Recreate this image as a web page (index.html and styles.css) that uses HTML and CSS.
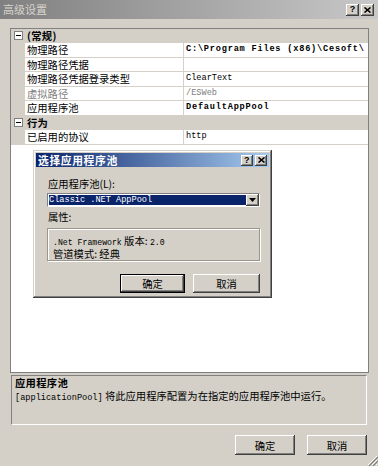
FILE: index.html
```html
<!DOCTYPE html>
<html lang="zh-CN">
<head>
  <meta charset="UTF-8" />
  <title>高级设置</title>
  <link rel="stylesheet" href="styles.css">
</head>
<body>
  <div class="window">
    <div class="titlebar">
      <span class="title">高级设置</span>
      <div class="cap-btns">
        <span class="cap-btn">?</span>
        <span class="cap-btn">
          <svg width="7" height="6" viewBox="0 0 7 6"><path d="M0.5 0.5 L6.5 5.5 M6.5 0.5 L0.5 5.5" stroke="#000" stroke-width="1.6"/></svg>
        </span>
      </div>
    </div>

    <div class="content">
      <!-- 属性网格 -->
      <div class="propgrid">
        <div class="row category">
          <span class="margin"><span class="expander"></span></span>
          <span class="cat-name">(常规)</span>
        </div>
        <div class="row">
          <span class="margin"></span>
          <span class="name">物理路径</span>
          <span class="value strong">C:\Program Files (x86)\Cesoft\</span>
        </div>
        <div class="row">
          <span class="margin"></span>
          <span class="name">物理路径凭据</span>
          <span class="value"></span>
        </div>
        <div class="row">
          <span class="margin"></span>
          <span class="name">物理路径凭据登录类型</span>
          <span class="value">ClearText</span>
        </div>
        <div class="row readonly">
          <span class="margin"></span>
          <span class="name">虚拟路径</span>
          <span class="value">/ESWeb</span>
        </div>
        <div class="row">
          <span class="margin"></span>
          <span class="name">应用程序池</span>
          <span class="value strong">DefaultAppPool</span>
        </div>
        <div class="row category">
          <span class="margin"><span class="expander"></span></span>
          <span class="cat-name">行为</span>
        </div>
        <div class="row">
          <span class="margin"></span>
          <span class="name">已启用的协议</span>
          <span class="value">http</span>
        </div>
      </div>

      <!-- 说明区 -->
      <div class="desc">
        <div class="desc-title">应用程序池</div>
        <div class="desc-text"><span class="mono">[applicationPool]</span> 将此应用程序配置为在指定的应用程序池中运行。</div>
      </div>

      <div class="actions">
        <button class="btn">确定</button>
        <button class="btn">取消</button>
      </div>
    </div>

    <!-- 选择应用程序池 对话框 -->
    <div class="dialog">
      <div class="dlg-title">
        <span>选择应用程序池</span>
        <div class="cap-btns">
          <span class="cap-btn small">?</span>
          <span class="cap-btn small">
            <svg width="7" height="6" viewBox="0 0 7 6"><path d="M0.5 0.5 L6.5 5.5 M6.5 0.5 L0.5 5.5" stroke="#000" stroke-width="1.6"/></svg>
          </span>
        </div>
      </div>
      <div class="dlg-body">
        <div class="field-label">应用程序池(L):</div>
        <div class="combo">
          <span class="combo-sel">Classic .NET AppPool</span>
          <span class="combo-btn">
            <svg width="7" height="4" viewBox="0 0 7 4"><path d="M0 0 H7 L3.5 4 Z" fill="#000"/></svg>
          </span>
        </div>
        <div class="field-label tight">属性:</div>
        <div class="props-box">
          <div><span class="mono small">.Net Framework</span> 版本: <span class="mono small">2.0</span></div>
          <div>管道模式: 经典</div>
        </div>
        <div class="dlg-actions">
          <button class="btn default">确定</button>
          <button class="btn">取消</button>
        </div>
      </div>
    </div>

    <svg class="grip" width="12" height="12" viewBox="0 0 12 12">
      <path d="M11 2 L2 11 M11 6 L6 11 M11 10 L10 11" stroke="#fff" stroke-width="1"/>
      <path d="M12 3 L3 12 M12 7 L7 12" stroke="#808080" stroke-width="1.2"/>
    </svg>
  </div>
</body>
</html>
```

FILE: styles.css
```css
:root {
  --face: #d4d0c8;
  --shadow: #808080;
  --dark: #404040;
  --hilite: #fff;
  --sel: #0a246a;
  --cjk: "Noto Sans CJK SC", "Noto Sans CJK JP", sans-serif;
  --mono: "Liberation Mono", "Noto Sans CJK SC", monospace;
}
* { box-sizing: border-box; }
body {
  margin: 0;
  background: var(--face);
  font-family: var(--cjk);
  font-size: 10.3px;
  line-height: 13px;
  color: #000;
}

.window {
  position: relative;
  width: 378px;
  height: 466px;
  display: flex;
  flex-direction: column;
  overflow: hidden;
}

/* 标题栏 (非活动) */
.titlebar {
  height: 19px;
  display: flex;
  align-items: center;
  justify-content: space-between;
  padding: 0 4px 0 3px;
  background: linear-gradient(to right, #808080, #c8c8c8);
  color: #d8d4cc;
}
.title { font-size: 11px; }
.cap-btns { display: flex; gap: 2px; }
.cap-btn {
  width: 13px;
  height: 12px;
  display: flex;
  align-items: center;
  justify-content: center;
  background: var(--face);
  box-shadow: inset -1px -1px var(--dark), inset 1px 1px var(--hilite), inset -2px -2px var(--shadow);
  font: bold 9px/1 "Liberation Sans", sans-serif;
  color: #000;
}
.cap-btn.small { width: 12px; height: 11px; }

.content {
  flex: 1;
  display: flex;
  flex-direction: column;
  padding: 9px 9px 0 10px;
}

/* 属性网格 */
.propgrid {
  height: 345px;
  background: #fff;
  border: 1px solid var(--shadow);
  overflow: hidden;
}
.row {
  display: flex;
  height: 14.45px;
  line-height: 13.45px;
  border-bottom: 1px solid var(--face);
}
.margin {
  width: 14px;
  flex: none;
  display: flex;
  align-items: center;
  justify-content: center;
  background: var(--face);
}
.expander {
  position: relative;
  width: 9px;
  height: 9px;
  border: 1px solid var(--shadow);
  background: #fff;
}
.expander::after {
  content: "";
  position: absolute;
  left: 1px;
  top: 3px;
  width: 5px;
  height: 1px;
  background: #000;
}
.category { background: var(--face); font-weight: bold; }
.cat-name { padding-left: 2px; letter-spacing: 0.3px; }
.name {
  width: 158px;
  flex: none;
  padding-left: 2px;
  white-space: nowrap;
  overflow: hidden;
}
.value {
  flex: 1;
  border-left: 1px solid var(--face);
  padding-left: 2px;
  white-space: nowrap;
  overflow: hidden;
  font-family: var(--mono);
  font-size: 8.6px;
}
.value.strong { font-weight: bold; letter-spacing: 0.8px; }
.readonly { color: var(--shadow); }

/* 说明区 */
.desc {
  height: 50px;
  margin: 2px 2px 0 1px;
  padding: 0 3px;
  border: 1px solid;
  border-color: var(--shadow) var(--hilite) var(--hilite) var(--shadow);
}
.desc-title { font-weight: bold; letter-spacing: 0.3px; }
.mono { font-family: var(--mono); font-size: 8.6px; }
.mono.small { font-size: 8.2px; }

.actions {
  display: flex;
  justify-content: flex-end;
  gap: 12px;
  margin-top: 10px;
  padding-right: 2px;
}
.btn {
  width: 60px;
  height: 20px;
  padding: 0;
  border: none;
  background: var(--face);
  box-shadow: inset -1px -1px var(--dark), inset 1px 1px var(--hilite), inset -2px -2px var(--shadow);
  font-family: var(--cjk);
  font-size: 10.3px;
  color: #000;
}

/* 对话框 */
.dialog {
  position: absolute;
  left: 33px;
  top: 150px;
  width: 239px;
  height: 148px;
  padding: 2px;
  background: var(--face);
  box-shadow: inset -1px -1px var(--dark), inset 1px 1px var(--face), inset -2px -2px var(--shadow), inset 2px 2px var(--hilite);
}
.dlg-title {
  height: 14px;
  margin: 1px 1px 0;
  padding: 0 2px 0 2px;
  display: flex;
  align-items: center;
  justify-content: space-between;
  background: linear-gradient(to right, var(--sel), #a6caf0);
  color: #fff;
  font-size: 10.8px;
  font-weight: bold;
  letter-spacing: 0.6px;
}
.dlg-body {
  padding: 0 10px 0 12px;
}
.field-label { margin-top: 10px; padding-left: 1px; }
.field-label.tight { margin-top: 3px; }
.combo {
  display: flex;
  height: 14px;
  margin-top: 3px;
  border: 1px solid;
  border-color: var(--shadow) var(--hilite) var(--hilite) var(--shadow);
  background: #fff;
}
.combo-sel {
  flex: 1;
  margin: 1px 0 1px 1px;
  background: var(--sel);
  color: #fff;
  font-family: var(--mono);
  font-size: 8.6px;
  line-height: 10px;
  white-space: nowrap;
}
.combo-btn {
  width: 13px;
  margin: 0;
  display: flex;
  align-items: center;
  justify-content: center;
  background: var(--face);
  box-shadow: inset -1px -1px var(--dark), inset 1px 1px var(--hilite), inset -2px -2px var(--shadow);
}
.props-box {
  height: 33px;
  margin-top: 5px;
  padding: 6px 0 0 5px;
  border: 1px solid #9a968e;
  box-shadow: inset 1px 1px var(--hilite), 1px 1px var(--hilite);
  line-height: 11px;
}
.dlg-actions {
  display: flex;
  justify-content: flex-end;
  gap: 8px;
  margin-top: 13px;
}
.dlg-actions .btn { width: 67px; height: 19px; }
.dlg-actions .btn.default {
  width: 65px;
  box-shadow: inset 0 0 0 1px #000, inset -2px -2px var(--dark), inset 2px 2px var(--hilite), inset -3px -3px var(--shadow);
}

.grip {
  position: absolute;
  right: 0;
  bottom: 0;
}
```
